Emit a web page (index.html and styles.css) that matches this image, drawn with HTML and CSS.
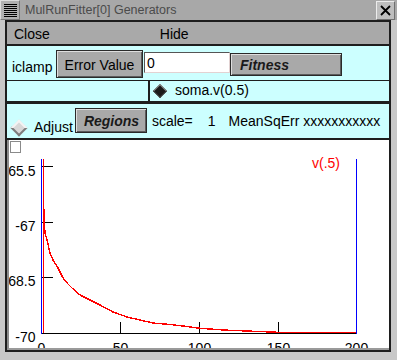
FILE: index.html
```html
<!DOCTYPE html>
<html lang="en">
<head>
  <meta charset="UTF-8" />
  <title>MulRunFitter[0] Generators</title>
  <link rel="stylesheet" href="styles.css">
</head>
<body>

  <div class="titlebar">
    <div class="win-menu">
      <svg width="18" height="18" viewBox="0 0 18 18">
        <g stroke="#000" stroke-width="1" shape-rendering="crispEdges">
          <line x1="3" y1="3.5" x2="16" y2="3.5"/>
          <line x1="3" y1="5.5" x2="16" y2="5.5"/>
          <line x1="3" y1="7.5" x2="16" y2="7.5"/>
          <line x1="3" y1="9.5" x2="16" y2="9.5"/>
          <line x1="3" y1="11.5" x2="16" y2="11.5"/>
          <line x1="3" y1="13.5" x2="16" y2="13.5"/>
          <line x1="3" y1="15.5" x2="16" y2="15.5"/>
        </g>
      </svg>
    </div>
    <div class="title">MulRunFitter[0] Generators</div>
    <div class="win-close">
      <svg width="17" height="17" viewBox="0 0 17 17">
        <path d="M4 4 L13 13 M13 4 L4 13" stroke="#000" stroke-width="1.8"/>
      </svg>
    </div>
  </div>

  <div class="window">
    <div class="menubar">
      <span class="menu-item">Close</span>
      <span class="menu-item menu-hide">Hide</span>
    </div>

    <div class="panel">
      <div class="row-fit">
        <span class="label">iclamp</span>
        <div class="btn btn-error">Error Value</div>
        <div class="field">0</div>
        <div class="btn btn-em btn-fitness">Fitness</div>
      </div>
      <div class="row-var">
        <div class="cell-empty"></div>
        <span class="diamond diamond-on"></span>
        <span class="var-name">soma.v(0.5)</span>
      </div>
    </div>

    <div class="row-adjust">
      <span class="diamond diamond-off"></span>
      <span class="adjust">Adjust</span>
      <div class="btn btn-em btn-regions">Regions</div>
      <span class="scale">scale=</span>
      <span class="scale-val">1</span>
      <span class="err">MeanSqErr xxxxxxxxxxx</span>
    </div>

    <div class="graph">
      <svg width="380" height="208" viewBox="9 140 380 208">
        <rect x="10.5" y="141.5" width="10" height="11" fill="#fff" stroke="#8a8a8a"/>

        <!-- axes and ticks -->
        <g stroke="#000" stroke-width="1" shape-rendering="crispEdges">
          <line x1="41" y1="333.5" x2="357" y2="333.5"/>
          <line x1="41" y1="166.5" x2="53" y2="166.5"/>
          <line x1="41" y1="222.5" x2="53" y2="222.5"/>
          <line x1="41" y1="277.5" x2="53" y2="277.5"/>
          <line x1="120.5" y1="322" x2="120.5" y2="333"/>
          <line x1="199.5" y1="322" x2="199.5" y2="333"/>
          <line x1="278.5" y1="322" x2="278.5" y2="333"/>
        </g>

        <g class="axis-text" text-anchor="end">
          <text x="35.5" y="175.5">-65.5</text>
          <text x="35.5" y="231">-67</text>
          <text x="35.5" y="286">-68.5</text>
          <text x="35.5" y="342">-70</text>
        </g>
        <g class="axis-text" text-anchor="middle">
          <text x="41.5" y="353">0</text>
          <text x="120.5" y="353">50</text>
          <text x="199.5" y="353">100</text>
          <text x="278.5" y="353">150</text>
          <text x="356.5" y="353">200</text>
        </g>

        <!-- region markers -->
        <g stroke="#0000ff" stroke-width="1" shape-rendering="crispEdges">
          <line x1="41.5" y1="159" x2="41.5" y2="334"/>
          <line x1="356.5" y1="159" x2="356.5" y2="334"/>
        </g>

        <!-- v(.5) trace -->
        <g stroke="#ff0000" stroke-width="1.4" fill="none" shape-rendering="crispEdges">
          <line x1="43.5" y1="159" x2="43.5" y2="333"/>
          <polyline points="43.5,159 43.5,200 44,215 44.5,225 45,233 47,240 50,253 53,260 58,268 63,278 68,284 72,288 80,295 90,300 100,305 113,312 127,317 140,320 153,323 170,324.5 183,326 197,328 223,330 247,331 283,332.5 356,332.5"/>
        </g>
        <text class="trace-label" x="312" y="168">v(.5)</text>
      </svg>
    </div>
  </div>

</body>
</html>
```

FILE: styles.css
```css
* {
  box-sizing: border-box;
}

html, body {
  margin: 0;
}

body {
  width: 397px;
  height: 360px;
  overflow: hidden;
  background-color: #c8c8c8;
  color: #000;
  font-family: "Liberation Sans", Arial, sans-serif;
  font-size: 14px;
}

/* title bar */
.titlebar {
  display: flex;
  height: 20px;
  background-color: #a8a8a8;
}

.win-menu {
  width: 20px;
  height: 20px;
  border: 1px solid #dcdcdc;
  border-right-color: #7a7a7a;
  border-bottom-color: #7a7a7a;
  background-color: #b0b0b0;
}

.win-menu svg {
  display: block;
}

.title {
  flex: 1;
  padding-left: 5px;
  font-size: 12.5px;
  line-height: 20px;
  color: #4b4b4b;
}

.win-close {
  width: 19px;
  height: 19px;
  margin: 1px 2px 0 0;
  border: 1px solid #ececec;
  border-right-color: #707070;
  border-bottom-color: #707070;
  background-color: #bebebe;
}

.win-close svg {
  display: block;
}

/* window body */
.window {
  display: flex;
  flex-direction: column;
  width: 386px;
  height: 332px;
  margin-left: 5px;
  border: 2px solid #1e1e1e;
  background-color: #ccffff;
}

.menubar {
  display: flex;
  height: 24px;
  padding: 1px 0 0 7px;
  line-height: 22px;
  background-color: #a9a9a9;
  border-bottom: 2px solid #1e1e1e;
}

.menu-hide {
  margin-left: 110px;
}

.panel {
  background-color: #ccffff;
}

.row-fit {
  display: flex;
  align-items: flex-start;
  height: 35px;
  border-bottom: 1px solid #1e1e1e;
}

.label {
  width: 44px;
  margin: 13px 0 0 5px;
  line-height: 16px;
}

.btn {
  line-height: 16px;
  background-color: #a9a9a9;
  border: 1px solid #2a2a2a;
  box-shadow: inset 1px 1px 0 #dedede, inset -1px -1px 0 #5c5c5c;
  white-space: nowrap;
}

.btn-error {
  width: 87px;
  height: 28px;
  margin-top: 4px;
  padding-top: 6px;
  text-align: center;
}

.btn-em {
  font-weight: bold;
  font-style: italic;
  color: #1a1a1a;
}

.btn-fitness {
  width: 112px;
  height: 23px;
  margin-top: 7px;
  padding: 3px 0 0 9px;
}

.field {
  width: 86px;
  height: 21px;
  margin: 6px 0 0 1px;
  padding: 2px 0 0 2px;
  line-height: 16px;
  background-color: #fff;
  border: 1px solid #e2d2d2;
  border-top-color: #555;
  border-left-color: #555;
}

.row-var {
  display: flex;
  align-items: flex-start;
  height: 23px;
  border-bottom: 3px solid #1e1e1e;
}

.cell-empty {
  width: 143px;
  height: 20px;
  border-right: 2px solid #1e1e1e;
}

.diamond {
  display: block;
  transform: rotate(45deg);
}

.diamond-on {
  width: 10px;
  height: 10px;
  margin: 4.5px 0 0 4.5px;
  background-color: #1a1a1a;
  border: 1px solid #8a8a8a;
  border-bottom-color: #3a3a3a;
  border-right-color: #3a3a3a;
}

.var-name {
  margin: 1px 0 0 10.5px;
  line-height: 16px;
}

.row-adjust {
  display: flex;
  align-items: flex-start;
  height: 36px;
  overflow: hidden;
  white-space: nowrap;
  border-bottom: 2px solid #1e1e1e;
}

.diamond-off {
  width: 12px;
  height: 12px;
  margin: 18px 0 0 6px;
  background-color: #d8d8d8;
  border: 2px solid #f4f4f4;
  border-right-color: #7c7c7c;
  border-bottom-color: #7c7c7c;
}

.adjust {
  margin: 15px 0 0 9px;
  line-height: 16px;
}

.btn-regions {
  width: 72px;
  height: 25px;
  margin: 4px 0 0 2px;
  padding: 4px 0 0 8px;
}

.scale {
  margin: 9px 0 0 5px;
  line-height: 16px;
}

.scale-val {
  margin: 9px 0 0 15px;
  line-height: 16px;
}

.err {
  margin: 9px 0 0 13px;
  line-height: 16px;
}

/* graph canvas */
.graph {
  flex: 1;
  background-color: #fff;
  border-left: 2px solid #8c8c8c;
  border-bottom: 2px solid #9a9a9a;
  overflow: hidden;
}

.graph svg {
  display: block;
}

.axis-text {
  font-family: "Liberation Sans", Arial, sans-serif;
  font-size: 14px;
  fill: #000;
}

.trace-label {
  font-family: "Liberation Sans", Arial, sans-serif;
  font-size: 14px;
  fill: #ff0000;
}
```
